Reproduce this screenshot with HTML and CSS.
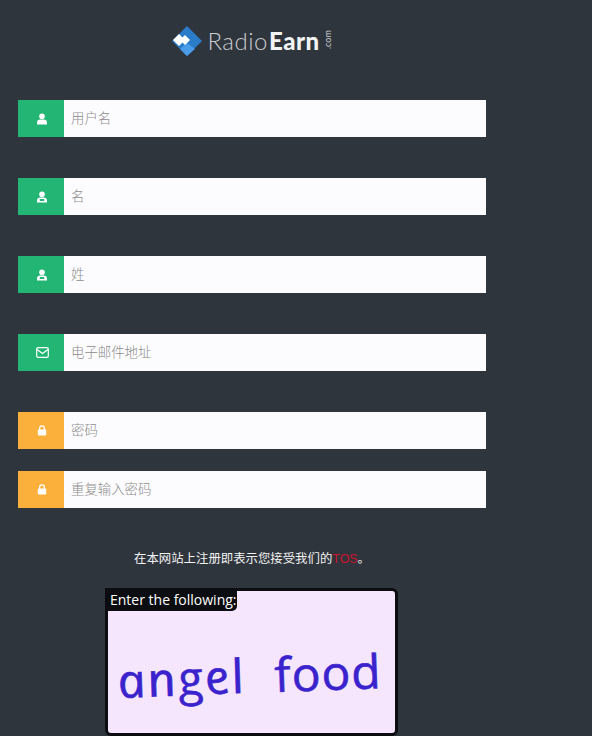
FILE: index.html
```html
<!DOCTYPE html>
<html lang="zh">
<head>
    <meta charset="UTF-8">
    <meta name="viewport" content="width=device-width, initial-scale=1.0">
    <title>RadioEarn</title>
    <link rel="stylesheet" href="styles.css">
</head>
<body>
    <div class="page">
        <div class="logo">
            <svg class="logo-mark" width="30" height="30" viewBox="0 0 30 30">
                <polygon points="15,0 30,15 15,30 0,15" fill="#2a7cc9"/>
                <polygon points="15,17 23,23 15,30 8,23" fill="#4a9ce8"/>
                <polygon points="7,8 13,14 7,20 1,14" fill="#ffffff"/>
                <polygon points="13,9 18,14 13,19 8,14" fill="#ffffff"/>
            </svg>
            <span class="logo-radio">Radio</span><span class="logo-earn">Earn</span><span class="logo-com">.com</span>
        </div>

        <form class="signup">
            <div class="field field-gap">
                <span class="field-icon green">
                    <svg width="12" height="12" viewBox="0 0 12 12"><circle cx="6" cy="3.3" r="2.8" fill="#fff"/><path d="M1 11.5V9.2C1 7.6 2.4 6.8 4 6.5h4c1.6.3 3 1.1 3 2.7v2.3z" fill="#fff"/></svg>
                </span>
                <input type="text" placeholder="用户名">
            </div>
            <div class="field field-gap">
                <span class="field-icon green">
                    <svg width="12" height="12" viewBox="0 0 12 12"><circle cx="6" cy="3.3" r="2.8" fill="#fff"/><path d="M1 11.5V9.2C1 7.6 2.4 6.8 4 6.5h4c1.6.3 3 1.1 3 2.7v2.3z" fill="#fff"/><rect x="3.8" y="8" width="4.4" height="2" rx=".6" fill="#22b573"/></svg>
                </span>
                <input type="text" placeholder="名">
            </div>
            <div class="field field-gap">
                <span class="field-icon green">
                    <svg width="12" height="12" viewBox="0 0 12 12"><circle cx="6" cy="3.3" r="2.8" fill="#fff"/><path d="M1 11.5V9.2C1 7.6 2.4 6.8 4 6.5h4c1.6.3 3 1.1 3 2.7v2.3z" fill="#fff"/><rect x="3.8" y="8" width="4.4" height="2" rx=".6" fill="#22b573"/></svg>
                </span>
                <input type="text" placeholder="姓">
            </div>
            <div class="field field-gap">
                <span class="field-icon green">
                    <svg width="13" height="11" viewBox="0 0 13 11"><rect x=".7" y=".7" width="11.6" height="9.6" rx="1.4" fill="none" stroke="#fff" stroke-width="1.2"/><path d="M1 2.6l5.5 3.9L12 2.6" fill="none" stroke="#fff" stroke-width="1.2"/></svg>
                </span>
                <input type="email" placeholder="电子邮件地址">
            </div>
            <div class="field">
                <span class="field-icon orange">
                    <svg width="10" height="11" viewBox="0 0 10 11"><path d="M2.6 5V3.3a2.4 2.4 0 0 1 4.8 0V5" fill="none" stroke="#fff" stroke-width="1.3"/><rect x=".8" y="4.6" width="8.4" height="6" rx="1" fill="#fff"/></svg>
                </span>
                <input type="password" placeholder="密码">
            </div>
            <div class="field">
                <span class="field-icon orange">
                    <svg width="10" height="11" viewBox="0 0 10 11"><path d="M2.6 5V3.3a2.4 2.4 0 0 1 4.8 0V5" fill="none" stroke="#fff" stroke-width="1.3"/><rect x=".8" y="4.6" width="8.4" height="6" rx="1" fill="#fff"/></svg>
                </span>
                <input type="password" placeholder="重复输入密码">
            </div>
        </form>

        <p class="terms">在本网站上注册即表示您接受我们的<a href="#">TOS</a>。</p>

        <div class="captcha">
            <div class="captcha-label">Enter the following:</div>
            <svg class="captcha-word" width="287" height="145" viewBox="0 0 287 145">
                <text class="captcha-text captcha-slant" transform="translate(13 107) rotate(-2.4) skewX(12) scale(1.04 1)">angel</text>
                <text class="captcha-text captcha-tight" transform="translate(167 101) rotate(-2) scale(1.02 1)">food</text>
            </svg>
        </div>
    </div>
</body>
</html>
```

FILE: styles.css
```css
* {
    margin: 0;
    padding: 0;
    box-sizing: border-box;
}

html, body {
    height: 736px;
    overflow: hidden;
}

body {
    background: #2f353d;
    font-family: "Liberation Sans", "Noto Sans CJK SC", sans-serif;
}

.page {
    width: 468px;
    margin-left: 18px;
}

/* Logo */
.logo {
    height: 100px;
    padding-top: 26px;
    display: flex;
    justify-content: center;
    align-items: flex-start;
    font-family: Lato, sans-serif;
    font-size: 24px;
    letter-spacing: 0.5px;
    line-height: 30px;
    color: #c9ccd0;
}

.logo-mark {
    margin-right: 5px;
}

.logo-radio {
    font-weight: 300;
}

.logo-earn {
    font-weight: 900;
    margin-left: 1px;
    color: #f2f3f4;
}

.logo-com {
    font-size: 9px;
    line-height: 9px;
    letter-spacing: 0;
    writing-mode: vertical-rl;
    transform: rotate(180deg);
    margin-top: 3px;
    margin-left: 3px;
    height: 20px;
}

/* Form rows */
.field {
    display: flex;
    height: 37px;
    margin-bottom: 22px;
}

.field-gap {
    margin-bottom: 41px;
}

.field-icon {
    width: 46px;
    flex: none;
    display: flex;
    justify-content: center;
    align-items: center;
    padding-left: 2px;
}

.green {
    background: #22b573;
}

.orange {
    background: #fbb03b;
}

.field input {
    flex: 1;
    min-width: 0;
    border: 0;
    outline: 0;
    padding: 0 7px 3px;
    background: #fcfcfe;
    font-family: "Noto Sans CJK SC", sans-serif;
    font-size: 13.4px;
    font-weight: 300;
}

.field input::placeholder {
    color: #8c8c8c;
}

/* Terms line */
.terms {
    margin-top: 42px;
    text-align: center;
    font-size: 12.4px;
    line-height: 18px;
    color: #f2f2f2;
}

.terms a {
    color: #d0102c;
    text-decoration: none;
}

/* Captcha */
.captcha {
    position: relative;
    width: 293px;
    height: 148px;
    margin: 20px 0 0 87px;
    border: 3px solid #0c0d10;
    border-radius: 6px;
    background: #f5e5fd;
}

.captcha-label {
    position: absolute;
    top: -3px;
    left: -3px;
    height: 23px;
    width: 132px;
    padding-left: 5px;
    background: #0c0d10;
    border-radius: 0 0 5px 0;
    color: #fff;
    font-family: "Open Sans", sans-serif;
    font-size: 14px;
    line-height: 23px;
    white-space: nowrap;
}

.captcha-word {
    display: block;
}

.captcha-text {
    font-family: "Open Sans", sans-serif;
    font-size: 47px;
    letter-spacing: 2px;
    fill: #3a22cc;
    stroke: #3a22cc;
    stroke-width: 0.6px;
}

.captcha-slant {
    font-style: italic;
}

.captcha-tight {
    letter-spacing: 1px;
}
```
